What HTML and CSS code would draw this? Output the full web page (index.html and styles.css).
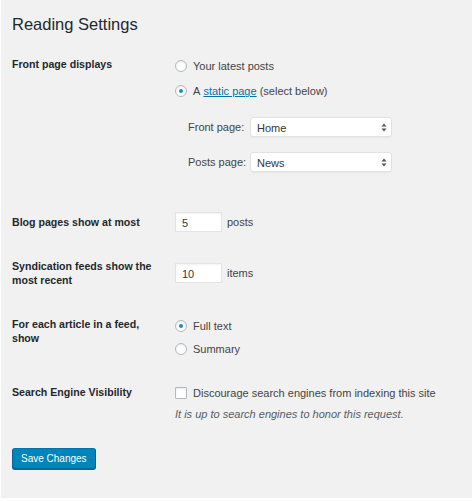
FILE: index.html
```html
<!DOCTYPE html>
<html>
<head>
    <title>Reading Settings</title>
    <link rel="stylesheet" href="styles.css">
</head>
<body>
    <div class="page">
        <h1>Reading Settings</h1>

        <form class="form-table">
            <div class="label">Front page displays</div>
            <div class="field field-front">
                <label class="choice">
                    <span class="radio"></span>
                    Your latest posts
                </label>
                <label class="choice choice-second">
                    <span class="radio checked"></span>
                    A&nbsp;<a href="#">static page</a>&nbsp;(select below)
                </label>
                <div class="page-select">
                    <span class="select-label">Front page:</span>
                    <div class="select">
                        <span>Home</span>
                        <svg class="arrows" width="6" height="9" viewBox="0 0 6 9">
                            <path d="M3 0.5 L5.5 3.5 L0.5 3.5 Z M3 8.5 L5.5 5.5 L0.5 5.5 Z" fill="#555"/>
                        </svg>
                    </div>
                </div>
                <div class="page-select page-select-posts">
                    <span class="select-label">Posts page:</span>
                    <div class="select">
                        <span>News</span>
                        <svg class="arrows" width="6" height="9" viewBox="0 0 6 9">
                            <path d="M3 0.5 L5.5 3.5 L0.5 3.5 Z M3 8.5 L5.5 5.5 L0.5 5.5 Z" fill="#555"/>
                        </svg>
                    </div>
                </div>
            </div>

            <div class="label">Blog pages show at most</div>
            <div class="field field-posts">
                <span class="number">5</span>
                <span>posts</span>
            </div>

            <div class="label">Syndication feeds show the most recent</div>
            <div class="field field-feeds">
                <span class="number">10</span>
                <span>items</span>
            </div>

            <div class="label">For each article in a feed, show</div>
            <div class="field field-article">
                <label class="choice">
                    <span class="radio checked"></span>
                    Full text
                </label>
                <label class="choice choice-summary">
                    <span class="radio"></span>
                    Summary
                </label>
            </div>

            <div class="label">Search Engine Visibility</div>
            <div class="field field-search">
                <label class="choice">
                    <span class="checkbox"></span>
                    Discourage search engines from indexing this site
                </label>
                <p class="description">It is up to search engines to honor this request.</p>
            </div>
        </form>

        <button class="button-primary">Save Changes</button>
    </div>
</body>
</html>
```

FILE: styles.css
```css
body {
    margin: 0;
    background: #fff;
    font-family: "Liberation Sans", Arial, sans-serif;
    font-size: 11px;
    line-height: 14px;
    color: #444;
}
.page {
    margin: 0 2px 3px 1px;
    padding: 0 11px;
    height: 498px;
    background: #f1f1f1;
    overflow: hidden;
}
h1 {
    margin: 14px 0 1.5px;
    font-size: 16.5px;
    line-height: 21px;
    font-weight: 400;
    color: #23282d;
}
.form-table {
    display: grid;
    grid-template-columns: 163px 1fr;
    grid-template-rows: 158.9px 44px 57.7px 68.3px 56px;
}
.label {
    padding-top: 20px;
    padding-right: 20px;
    font-size: 10.6px;
    font-weight: 700;
    color: #23282d;
}
.field-front {
    padding-top: 22.9px;
}
.field-posts {
    padding-top: 16.9px;
}
.field-feeds {
    padding-top: 23.9px;
}
.field-article {
    padding-top: 22.3px;
}
.field-search {
    padding-top: 20.7px;
}
.choice {
    display: flex;
    align-items: center;
    height: 14px;
    white-space: nowrap;
}
.choice-second {
    margin-top: 11px;
}
.choice-summary {
    margin-top: 9px;
}
.choice a {
    color: #0073aa;
    text-decoration: underline;
}
.radio,
.checkbox {
    position: relative;
    box-sizing: border-box;
    width: 12px;
    height: 12px;
    margin-right: 6px;
    border: 1px solid #b4b9be;
    background: #fff;
    box-shadow: inset 0 1px 2px rgba(0, 0, 0, 0.1);
    flex-shrink: 0;
}
.radio {
    border-radius: 50%;
}
.radio.checked::after {
    content: "";
    position: absolute;
    left: 3px;
    top: 3px;
    width: 4px;
    height: 4px;
    border-radius: 50%;
    background: #1e8cbe;
}
.checkbox {
    border-radius: 1px;
}
.page-select {
    display: flex;
    align-items: center;
    margin-top: 19px;
    padding-left: 13px;
    height: 20px;
}
.page-select-posts {
    margin-top: 15px;
}
.select-label {
    width: 62px;
    flex-shrink: 0;
}
.select {
    position: relative;
    box-sizing: border-box;
    width: 142px;
    height: 20px;
    padding: 3px 6px;
    background: #fff;
    border: 1px solid #e2e2e2;
    border-radius: 3px;
    box-shadow: 0 1px 1px rgba(0, 0, 0, 0.04);
    color: #32373c;
}
.select .arrows {
    position: absolute;
    right: 4px;
    top: 5px;
}
.field-posts,
.field-feeds {
    display: flex;
    align-items: center;
    align-self: start;
}
.number {
    box-sizing: border-box;
    width: 47px;
    height: 20px;
    margin-right: 5px;
    padding: 3px 6px;
    background: #fff;
    border: 1px solid #e4e4e4;
    box-shadow: inset 0 1px 2px rgba(0, 0, 0, 0.05);
    color: #32373c;
}
.description {
    margin: 7.3px 0 0;
    font-style: italic;
    color: #555d66;
}
.button-primary {
    display: block;
    margin-top: 26.3px;
    height: 21px;
    padding: 0 8px;
    font-family: "Liberation Sans", Arial, sans-serif;
    font-size: 10px;
    color: #fff;
    background: #0085ba;
    border: 1px solid #0073aa;
    border-color: #0073aa #006799 #006799;
    border-radius: 3px;
    box-shadow: 0 1px 0 #006799;
    cursor: pointer;
}
```
